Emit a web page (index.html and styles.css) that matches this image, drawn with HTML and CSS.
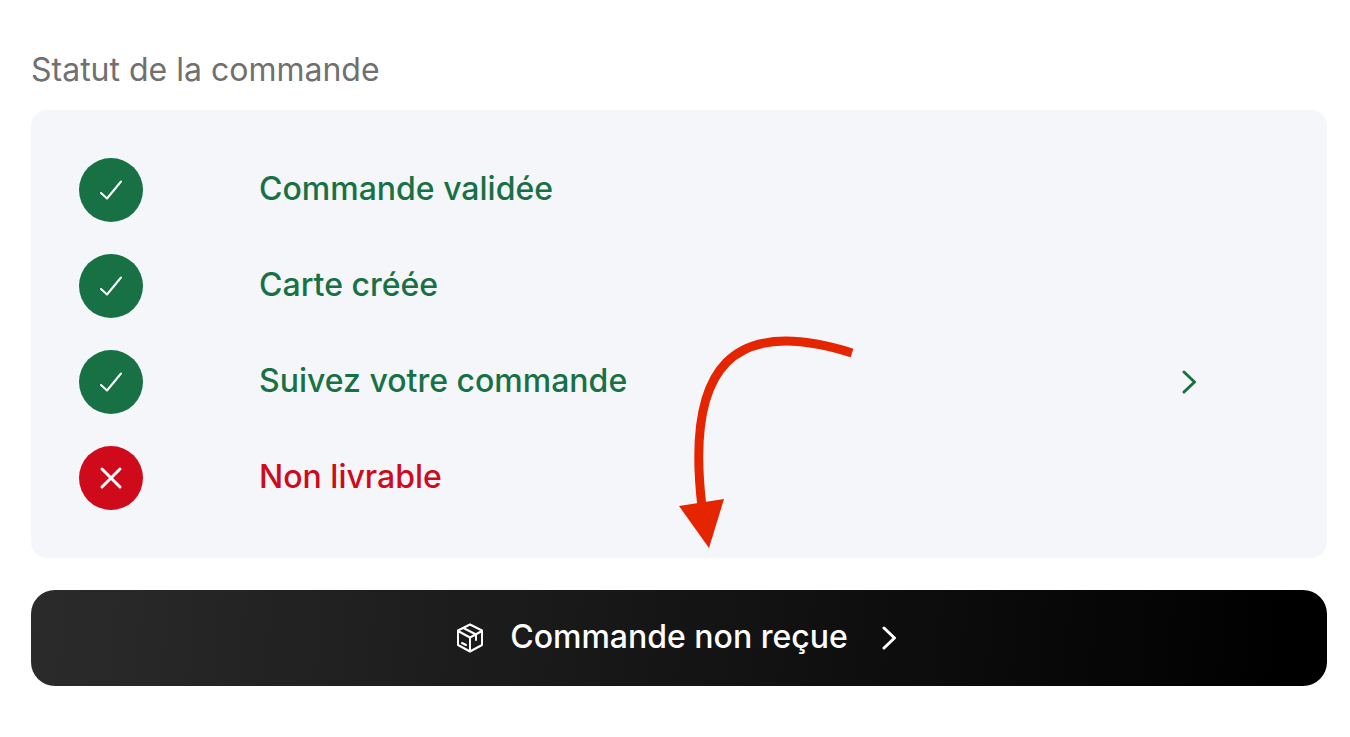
FILE: index.html
```html
<!DOCTYPE html>
<html lang="fr">
<head>
    <meta charset="UTF-8">
    <meta name="viewport" content="width=device-width, initial-scale=1.0">
    <title>Statut de la commande</title>
    <link rel="stylesheet" href="styles.css">
</head>
<body>
    <main class="order">
        <h1 class="order-title">Statut de la commande</h1>

        <div class="card">
            <ul class="steps">
                <li class="step">
                    <span class="badge">
                        <svg viewBox="0 0 64 64" aria-hidden="true"><path d="M22 35 L28 40.500 L42 23.500"/></svg>
                    </span>
                    <span class="step-label">Commande validée</span>
                </li>
                <li class="step">
                    <span class="badge">
                        <svg viewBox="0 0 64 64" aria-hidden="true"><path d="M22 35 L28 40.500 L42 23.500"/></svg>
                    </span>
                    <span class="step-label">Carte créée</span>
                </li>
                <li>
                    <a class="step" href="#suivi">
                        <span class="badge">
                            <svg viewBox="0 0 64 64" aria-hidden="true"><path d="M22 35 L28 40.500 L42 23.500"/></svg>
                        </span>
                        <span class="step-label">Suivez votre commande</span>
                        <svg class="chevron" viewBox="0 0 16 24" aria-hidden="true"><path d="M2 2 L12.500 12 L2 22"/></svg>
                    </a>
                </li>
                <li class="step error">
                    <span class="badge">
                        <svg class="cross" viewBox="0 0 64 64" aria-hidden="true"><path d="M23 23 L41 41 M41 23 L23 41"/></svg>
                    </span>
                    <span class="step-label">Non livrable</span>
                </li>
            </ul>

            <svg class="pointer" viewBox="0 0 176 214" aria-hidden="true">
                <path class="pointer-line" d="M173 18 C55 -19 6 29 23 172"/>
                <path class="pointer-head" d="M0 171 L45 164 L30 213 Z"/>
            </svg>
        </div>

        <button type="button" class="report">
            <svg class="parcel" viewBox="0 0 28 30" aria-hidden="true">
                <path d="M14 1.500 L26 7.500 V22 L14 28.500 L2 22 V7.500 Z M2 8 L14 14.500 L26 8 M14 14.500 V28.500"/>
                <path d="M7.500 5 L20 11.500 V17 M6 20 L10 22"/>
            </svg>
            <span class="report-label">Commande non reçue</span>
            <svg class="chevron" viewBox="0 0 16 24" aria-hidden="true"><path d="M2 2 L12.500 12 L2 22"/></svg>
        </button>
    </main>
</body>
</html>
```
FILE: styles.css
```css
* {
    box-sizing: border-box;
}

body {
    margin: 0;
    background: #fff;
    font-family: Inter, "Liberation Sans", sans-serif;
    font-size: 32px;
    line-height: 48px;
}

.order {
    padding: 46px 23px 32px 31px;
}

.order-title {
    margin: 0 0 16px;
    color: #707070;
    font-size: 32px;
    font-weight: 400;
}

.card {
    position: relative;
    padding: 48px;
    border-radius: 16px;
    background: #f4f6fa;
}

.steps {
    display: flex;
    flex-direction: column;
    gap: 32px;
    margin: 0;
    padding: 0;
    list-style: none;
}

.step {
    display: flex;
    align-items: center;
    color: #187144;
    font-weight: 500;
    text-decoration: none;
}

.step.error {
    color: #cf0a1a;
}

.step-label,
.report-label {
    padding-bottom: 2px;
}

.badge {
    width: 64px;
    height: 64px;
    margin-right: 116px;
    border-radius: 50%;
    background: #187144;
}

.error .badge {
    background: #cf0a1a;
}

.badge svg {
    display: block;
    fill: none;
    stroke: #fff;
    stroke-width: 2;
    stroke-linecap: round;
    stroke-linejoin: round;
}

.badge .cross {
    stroke-width: 3;
}

.chevron {
    width: 16px;
    height: 24px;
    fill: none;
    stroke: currentColor;
    stroke-width: 3;
    stroke-linecap: round;
    stroke-linejoin: round;
}

.step .chevron {
    margin-left: auto;
    margin-right: 81px;
}

/* red arrow drawn over the card, pointing to the button */
.pointer {
    position: absolute;
    top: 225px;
    left: 50%;
    width: 176px;
    height: 214px;
}

.pointer-line {
    fill: none;
    stroke: #e42500;
    stroke-width: 9;
}

.pointer-head {
    fill: #e42500;
}

.report {
    display: flex;
    align-items: center;
    justify-content: center;
    width: 100%;
    height: 96px;
    margin-top: 32px;
    padding: 0 36px 0 32px;
    border: 0;
    border-radius: 24px;
    background: linear-gradient(96deg, #2b2b2b, #000 97%);
    color: #fff;
    font: inherit;
    font-weight: 500;
    cursor: pointer;
}

.parcel {
    width: 28px;
    height: 30px;
    margin-right: 26px;
    fill: none;
    stroke: currentColor;
    stroke-width: 2;
    stroke-linecap: round;
    stroke-linejoin: round;
}

.report .chevron {
    margin-left: 34px;
}
```
